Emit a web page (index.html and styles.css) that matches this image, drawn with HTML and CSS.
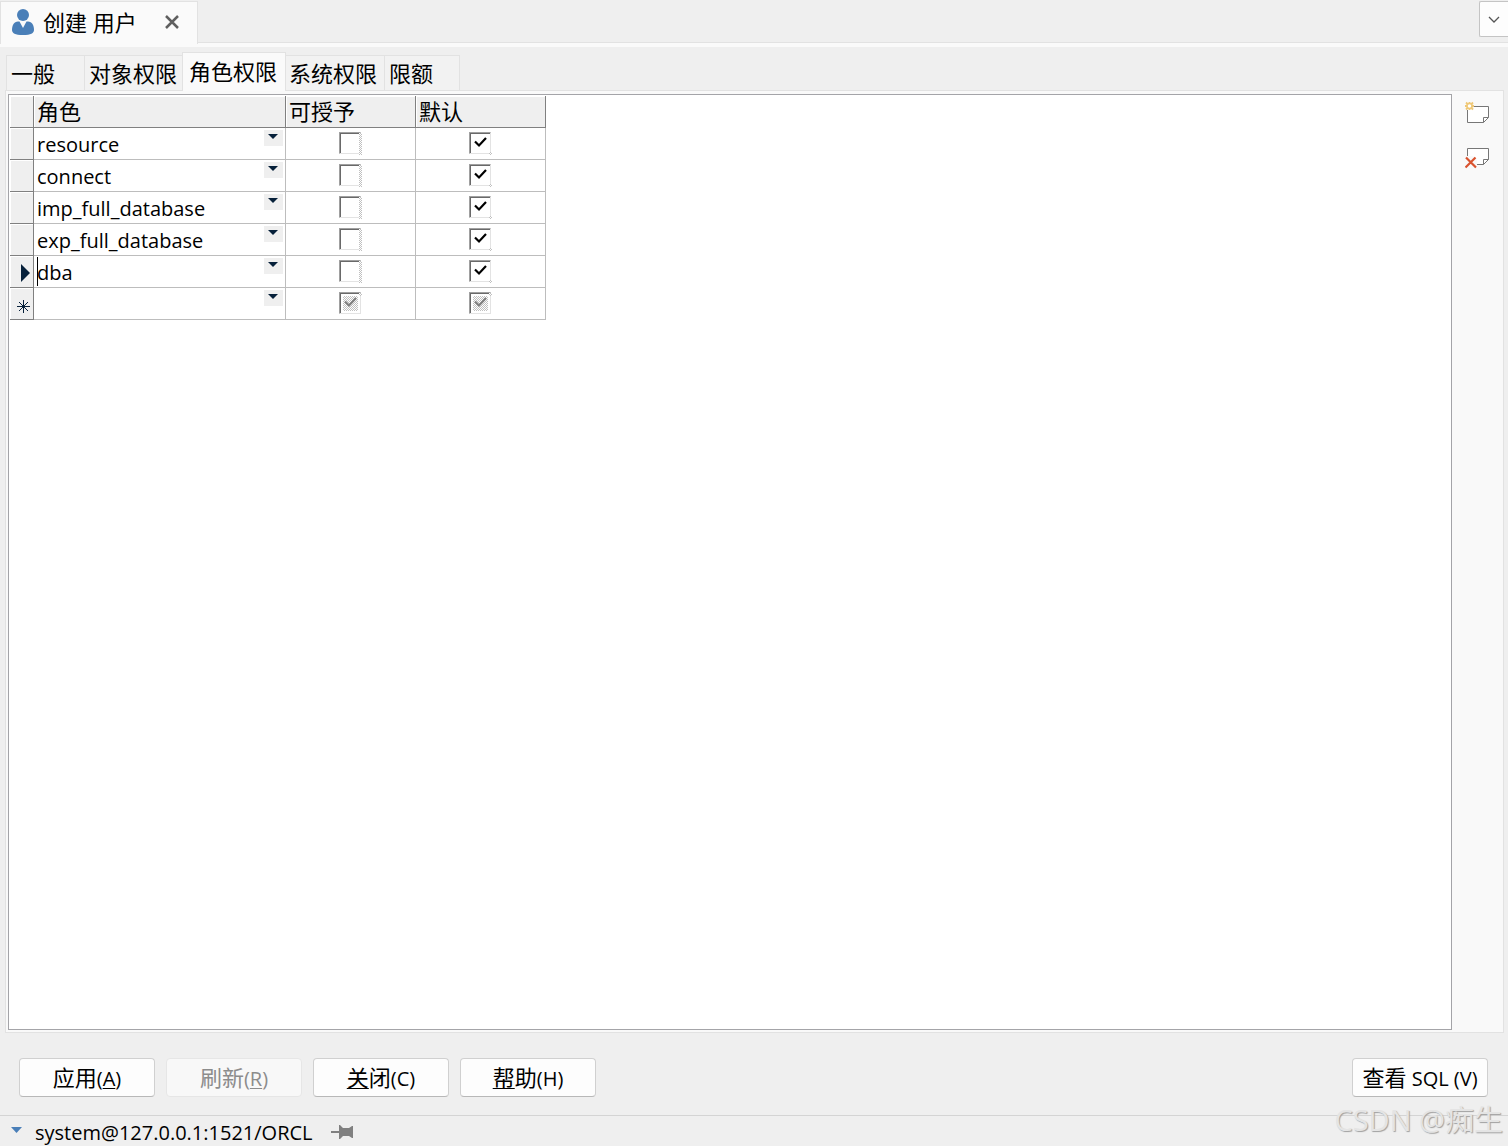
FILE: index.html
```html
<!DOCTYPE html>
<html lang="zh-CN">
<head>
    <meta charset="UTF-8">
    <meta name="viewport" content="width=device-width, initial-scale=1.0">
    <title>创建 用户</title>
    <link rel="stylesheet" href="styles.css">
</head>
<body>

    <header class="doc-bar">
        <div class="doc-tab">
            <svg class="user-icon" width="22" height="26" viewBox="0 0 22 26">
                <circle cx="11" cy="6" r="6" fill="#4a7fb8"/>
                <path d="M0 21c0-5 2-8 6-8.500h1.500L11 19l3.500-6.500H16c4 .5 6 3.500 6 8.500 0 3-3 5-11 5S0 24 0 21z" fill="#4a7fb8"/>
            </svg>
            <span class="doc-title">创建 用户</span>
            <button class="close-tab" aria-label="关闭标签">
                <svg width="14" height="14" viewBox="0 0 14 14">
                    <path d="M1 1l12 12M13 1L1 13" stroke="#5f5f5f" stroke-width="2.500" fill="none"/>
                </svg>
            </button>
        </div>
        <button class="tab-list" aria-label="标签列表">
            <svg width="12" height="7" viewBox="0 0 12 7">
                <path d="M1 1l5 5 5-5" stroke="#555" stroke-width="1.300" fill="none"/>
            </svg>
        </button>
    </header>

    <nav class="tabs" role="tablist">
        <button class="tab" role="tab">一般</button>
        <button class="tab" role="tab">对象权限</button>
        <button class="tab active" role="tab" aria-selected="true">角色权限</button>
        <button class="tab" role="tab">系统权限</button>
        <button class="tab" role="tab">限额</button>
    </nav>

    <main class="pane">
        <div class="grid-box">
            <table class="roles">
                <colgroup>
                    <col class="col-mark">
                    <col class="col-role">
                    <col class="col-check">
                    <col class="col-check">
                </colgroup>
                <thead>
                    <tr>
                        <th></th>
                        <th>角色</th>
                        <th>可授予</th>
                        <th>默认</th>
                    </tr>
                </thead>
                <tbody>
                    <tr>
                        <th></th>
                        <td class="role"><select aria-label="角色"><option>resource</option></select></td>
                        <td><input type="checkbox" aria-label="可授予"></td>
                        <td><input type="checkbox" aria-label="默认" checked></td>
                    </tr>
                    <tr>
                        <th></th>
                        <td class="role"><select aria-label="角色"><option>connect</option></select></td>
                        <td><input type="checkbox" aria-label="可授予"></td>
                        <td><input type="checkbox" aria-label="默认" checked></td>
                    </tr>
                    <tr>
                        <th></th>
                        <td class="role"><select aria-label="角色"><option>imp_full_database</option></select></td>
                        <td><input type="checkbox" aria-label="可授予"></td>
                        <td><input type="checkbox" aria-label="默认" checked></td>
                    </tr>
                    <tr>
                        <th></th>
                        <td class="role"><select aria-label="角色"><option>exp_full_database</option></select></td>
                        <td><input type="checkbox" aria-label="可授予"></td>
                        <td><input type="checkbox" aria-label="默认" checked></td>
                    </tr>
                    <tr>
                        <th>
                            <svg class="mark" width="14" height="18" viewBox="0 0 14 18">
                                <path d="M2 0l9 9-9 9z" fill="#06203a"/>
                            </svg>
                        </th>
                        <td class="role editing"><select aria-label="角色"><option>dba</option></select></td>
                        <td><input type="checkbox" aria-label="可授予"></td>
                        <td><input type="checkbox" aria-label="默认" checked></td>
                    </tr>
                    <tr>
                        <th>
                            <svg class="mark star" width="13" height="13" viewBox="0 0 13 13">
                                <path d="M6.500 0v13M0 6.500h13M2 2l9 9M11 2l-9 9" stroke="#06203a" fill="none"/>
                            </svg>
                        </th>
                        <td class="role"><select aria-label="角色"><option></option></select></td>
                        <td><input type="checkbox" aria-label="可授予" checked disabled></td>
                        <td><input type="checkbox" aria-label="默认" checked disabled></td>
                    </tr>
                </tbody>
            </table>
        </div>
        <div class="side-tools">
            <button class="tool" aria-label="新增">
                <svg width="26" height="26" viewBox="0 0 26 26">
                    <path d="M2.500 5.500h21v11l-5 5h-16z" fill="#fff" stroke="#777"/>
                    <path d="M18.500 21.500v-5h5" fill="none" stroke="#777"/>
                    <path d="M0 0h9v9H0z" fill="#f9f9f9"/>
                    <path d="M4.500 1v8M0 5h9M1 1.500l7 7M8 1.500l-7 7" stroke="#efc877" stroke-width="1.800"/>
                    <circle cx="4.500" cy="5" r="2.500" fill="#fff" stroke="#efc877" stroke-width="1.500"/>
                </svg>
            </button>
            <button class="tool" aria-label="删除">
                <svg width="26" height="26" viewBox="0 0 26 26">
                    <path d="M2.500 3.500h21v11l-5 5h-16z" fill="#fff" stroke="#777"/>
                    <path d="M18.500 19.500v-5h5" fill="none" stroke="#777"/>
                    <path d="M0 11h8l4 4v8H0z" fill="#f9f9f9"/>
                    <path d="M1 12.500l10 10M10.500 12.500L.5 22.500" stroke="#d9532f" stroke-width="2.200"/>
                </svg>
            </button>
        </div>
    </main>

    <div class="actions">
        <button class="btn">应用<span class="key">(<u>A</u>)</span></button>
        <button class="btn" disabled>刷新<span class="key">(<u>R</u>)</span></button>
        <button class="btn"><u>关</u>闭<span class="key">(C)</span></button>
        <button class="btn"><u>帮</u>助<span class="key">(H)</span></button>
        <button class="btn view-sql">查看<span class="key"> SQL (V)</span></button>
    </div>

    <footer class="status">
        <svg width="11" height="6" viewBox="0 0 11 6">
            <path d="M0 0h11L5.500 6z" fill="#4a7fb8"/>
        </svg>
        <span class="connection">system@127.0.0.1:1521/ORCL</span>
        <svg class="pin" width="22" height="14" viewBox="0 0 22 14">
            <path d="M0 6h8V0h1l3 3h6l3-2h1v12h-1l-3-2h-6l-3 3H8V8H0z" fill="#808080"/>
        </svg>
    </footer>

    <div class="watermark">CSDN @痴生</div>

</body>
</html>
```
FILE: styles.css
```css
* {
    box-sizing: border-box;
}
body {
    margin: 0;
    min-height: 100vh;
    display: flex;
    flex-direction: column;
    position: relative;
    font-family: "Open Sans", "Noto Sans CJK SC", sans-serif;
    font-size: 22px;
    line-height: 30px;
    color: #000;
    background: #efefef;
}
button, select {
    font: inherit;
    color: inherit;
}
button {
    padding: 0;
    border: none;
    background: none;
}
svg {
    display: block;
}
u {
    text-decoration-thickness: 1px;
    text-underline-offset: 2px;
    text-decoration-skip-ink: none;
}

/* document tabs */
.doc-bar {
    display: flex;
    justify-content: space-between;
    align-items: flex-start;
    height: 47px;
    padding-top: 1px;
    background: linear-gradient(#efefef 42px, #e2e2e2 42px, #e2e2e2 43px, #fafafa 43px);
}
.doc-tab {
    display: flex;
    align-items: center;
    width: 198px;
    height: 43px;
    padding: 0 18px 2px 11px;
    border: 1px solid #e2e2e2;
    border-bottom: none;
    background: #fafafa;
}
.doc-title {
    margin-left: 9px;
}
.close-tab {
    margin-left: auto;
}
.tab-list {
    display: flex;
    align-items: center;
    justify-content: center;
    width: 29px;
    height: 36px;
    border: 1px solid #c4c4c4;
    border-right: none;
    border-radius: 2px 0 0 2px;
    background: #fdfdfd;
}

/* property tabs */
.tabs {
    display: flex;
    align-items: flex-end;
    height: 43px;
    padding-left: 6px;
}
.tab {
    min-width: 76px;
    height: 35px;
    padding: 0 7px 0 4px;
    border: 1px solid #e2e2e2;
    border-right: none;
    border-bottom: none;
    text-align: left;
    background: #f2f2f2;
}
.tab:first-child {
    width: 78px;
}
.tab:last-child {
    border-right: 1px solid #e2e2e2;
}
.tab.active {
    position: relative;
    height: 39px;
    margin: 0 -2px -1px;
    padding: 0 8px 3px 6px;
    border-right: 1px solid #e2e2e2;
    background: #fafafa;
}

/* roles grid */
.pane {
    flex: 1;
    display: flex;
    margin: 0 4px 0 5px;
    padding: 3px 0 2px 2px;
    border: 1px solid #e2e2e2;
    background: #f9f9f9;
}
.grid-box {
    flex: 1;
    padding: 1px;
    border: 1px solid #a4a4a8;
    background: #fff;
}
.roles {
    table-layout: fixed;
    width: 536px;
    border-spacing: 0;
}
.col-mark {
    width: 24px;
}
.col-role {
    width: 252px;
}
.col-check {
    width: 130px;
}
.roles th, .roles td {
    height: 32px;
    padding: 0;
    border-right: 1px solid #bdbdbd;
    border-bottom: 1px solid #bdbdbd;
    vertical-align: top;
    text-align: center;
}
.roles th {
    padding-left: 3px;
    border-color: #808080;
    font-weight: normal;
    text-align: left;
    background: #efefef;
    box-shadow: inset 1px 1px #fff;
}
.roles tbody th {
    padding: 0;
}
.mark {
    margin: 8px 0 0 9px;
}
.mark.star {
    margin: 12px 0 0 7px;
}
.roles .role {
    position: relative;
}
.role select {
    display: block;
    width: 100%;
    height: 31px;
    padding: 2px 22px 0 3px;
    border: none;
    outline: none;
    appearance: none;
    font-size: 20px;
    line-height: 28px;
    background: none;
}
.role::before {
    content: "";
    position: absolute;
    top: 2px;
    right: 2px;
    width: 19px;
    height: 16px;
    background: #efefef;
    pointer-events: none;
}
.role::after {
    content: "";
    position: absolute;
    top: 6px;
    right: 7px;
    border: 5px solid transparent;
    border-top-color: #06203a;
    border-bottom: none;
    pointer-events: none;
}
.editing select {
    background: linear-gradient(#000, #000) 3px 1px / 1px 29px no-repeat;
}

/* sunken check boxes */
.roles input {
    appearance: none;
    display: block;
    position: relative;
    width: 22px;
    height: 22px;
    margin: 4px auto 0 53px;
    border: 1px solid #a0a0a0;
    border-right-color: #e3e3e3;
    border-bottom-color: #e3e3e3;
    background: #fff;
    box-shadow: inset 1px 1px #696969;
}
.roles input::after {
    content: "";
    position: absolute;
    top: 0;
    right: -2px;
    width: 3px;
    height: 22px;
    background: repeating-conic-gradient(#c0c0c0 0 25%, #fff 0 50%) 0 0 / 2px 2px;
}
.roles input:checked::after {
    top: 19px;
    height: 3px;
}
.roles input:checked {
    background: url("data:image/svg+xml,%3Csvg xmlns='http://www.w3.org/2000/svg' width='20' height='20'%3E%3Cpath d='M5 8.500l4 4 7-7.500' fill='none' stroke='%23000' stroke-width='2.200'/%3E%3C/svg%3E") no-repeat #fff;
}
.roles input:disabled {
    background:
        url("data:image/svg+xml,%3Csvg xmlns='http://www.w3.org/2000/svg' width='20' height='20'%3E%3Cpath d='M5 8.500l4 4 7-7.500' fill='none' stroke='%23808080' stroke-width='2.200'/%3E%3C/svg%3E") no-repeat,
        linear-gradient(#fff, #fff) 0 0 / 20px 3px no-repeat,
        linear-gradient(#fff, #fff) 0 0 / 3px 20px no-repeat,
        linear-gradient(#fff, #fff) 0 18px / 20px 2px no-repeat,
        linear-gradient(#fff, #fff) 18px 0 / 2px 20px no-repeat,
        repeating-conic-gradient(#c0c0c0 0 25%, #fff 0 50%) 0 0 / 2px 2px;
}
.roles input:disabled::after {
    top: 0;
}

/* buttons beside the grid */
.side-tools {
    display: flex;
    flex-direction: column;
    align-items: center;
    gap: 18px;
    width: 51px;
    padding-top: 7px;
}

/* bottom buttons */
.actions {
    display: flex;
    gap: 11px;
    padding: 25px 20px 18px 19px;
}
.btn {
    width: 136px;
    height: 39px;
    border: 1px solid #d0d0d0;
    border-bottom-color: #b8b8b8;
    border-radius: 4px;
    background: #fdfdfd;
}
.btn:disabled {
    border-color: #e6e6e6;
    color: #8c8c8c;
    background: #f8f8f8;
}
.key {
    font-size: 20px;
    white-space: pre;
}
.view-sql {
    margin-left: auto;
}

/* status bar */
.status {
    display: flex;
    align-items: center;
    height: 31px;
    padding-left: 11px;
    border-top: 1px solid #d4d4d4;
    font-size: 20px;
}
.status svg:first-child {
    margin-bottom: 2px;
}
.connection {
    margin: 4px 18px 0 13px;
}
.pin {
    margin-top: 2px;
}
.watermark {
    position: absolute;
    right: 5px;
    bottom: 6px;
    font-size: 29px;
    line-height: 40px;
    color: #e4e4e4;
    text-shadow: 1px 1px 1px #a0a0a0;
    pointer-events: none;
}
```
